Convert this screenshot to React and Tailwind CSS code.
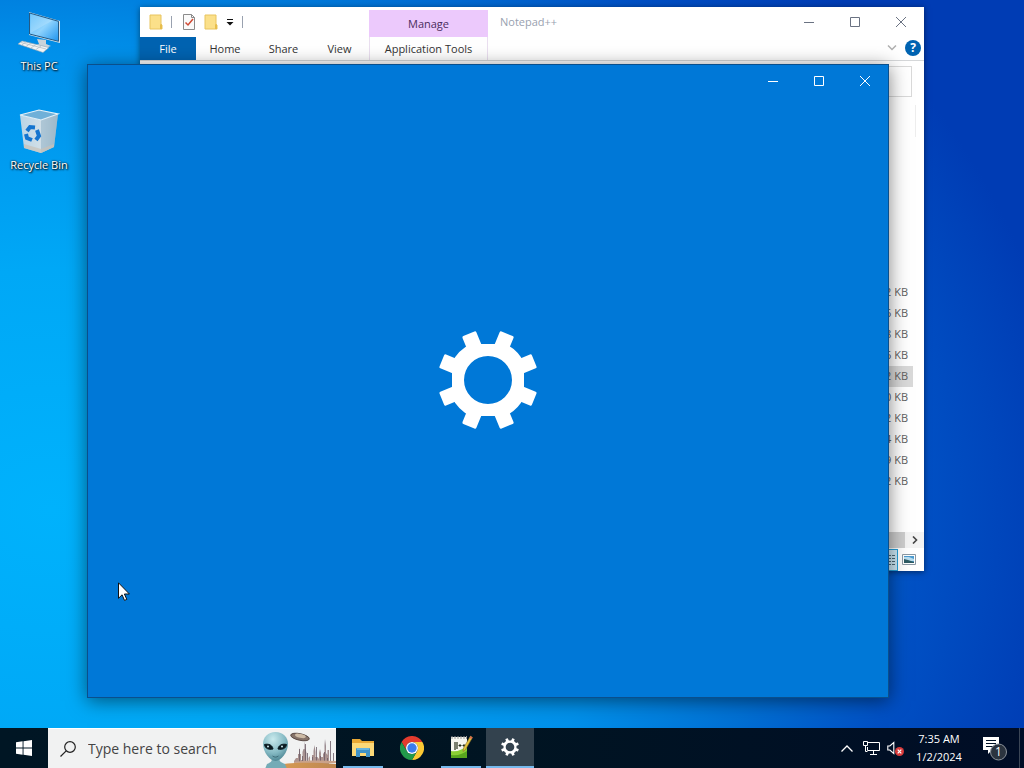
import React from 'react';

const FILE_SIZES = [
  { id: 1, size: '2 KB' },
  { id: 2, size: '6 KB' },
  { id: 3, size: '8 KB' },
  { id: 4, size: '6 KB' },
  { id: 5, size: '2 KB', selected: true },
  { id: 6, size: '0 KB' },
  { id: 7, size: '2 KB' },
  { id: 8, size: '4 KB' },
  { id: 9, size: '9 KB' },
  { id: 10, size: '2 KB' },
];

const TOOTH_ANGLES = [22.5, 67.5, 112.5, 157.5, 202.5, 247.5, 292.5, 337.5];

function Gear({ className }) {
  return (
    <svg viewBox="-50 -50 100 100" className={className} fill="currentColor" aria-hidden="true">
      <path
        fillRule="evenodd"
        d="M-17.4-36H17.4A40 40 0 0 1 36-17.4V17.4A40 40 0 0 1 17.4 36H-17.4A40 40 0 0 1-36 17.4V-17.4A40 40 0 0 1-17.4-36ZM0-24A24 24 0 1 0 0 24A24 24 0 1 0 0-24Z"
      />
      {TOOTH_ANGLES.map((angle) => (
        <rect key={angle} x="-7.5" y="-50" width="15" height="20" rx="1.5" transform={`rotate(${angle})`} />
      ))}
    </svg>
  );
}

function ComputerIcon() {
  return (
    <svg viewBox="0 0 44 44" className="w-11 h-11" aria-hidden="true">
      <defs>
        <linearGradient id="screen" x1="0" y1="0" x2="1" y2="1">
          <stop offset="0" stopColor="#52b9fb" />
          <stop offset="0.5" stopColor="#8fd3fd" />
          <stop offset="1" stopColor="#1c93ee" />
        </linearGradient>
      </defs>
      <path d="M20 29l9 1v4l5 2-9 3-8-3 5-2z" fill="#c9d3da" />
      <path d="M12 2l31 9v22l-31-8z" fill="#d3e3ec" />
      <path d="M12.500 3l29 8.300v20L12.500 24z" fill="url(#screen)" stroke="#245a85" strokeWidth="1" />
      <path d="M13.500 4l22 6.500L13.500 23z" fill="#fff" opacity=".18" />
      <path d="M5 31l27 6.500-6 5L1 34z" fill="#f2f4f5" stroke="#8fa5b3" strokeWidth=".6" />
      <path d="M4 32.500l25 6.500M9 31.800l-4 3M14 33l-5 3.500M19 34.500l-5 3.500M24 36l-5 3.500" stroke="#b3bec5" strokeWidth=".8" />
    </svg>
  );
}

function BinIcon() {
  return (
    <svg viewBox="0 0 44 46" className="w-11 h-[46px]" aria-hidden="true">
      <defs>
        <linearGradient id="bin" x1="0" y1="0" x2="1" y2="0">
          <stop offset="0" stopColor="#b9d4e6" />
          <stop offset="0.6" stopColor="#d3e0e8" />
          <stop offset="1" stopColor="#a8bfcd" />
        </linearGradient>
      </defs>
      <path d="M3 7l21 5 17-6-4 33-13 6-17-5z" fill="url(#bin)" />
      <path d="M24 12l17-6-4 33-13 6z" fill="#94b4c8" opacity=".6" />
      <path d="M3 7L22 2l19 4-17 6z" fill="#6fb0d8" stroke="#e4f1f8" strokeWidth="1.200" />
      <path d="M7 40l17 5 13-6v-3l-13 5-17-5z" fill="#c9c2b8" opacity=".7" />
      <g fill="none" stroke="#1474cf" strokeWidth="4">
        <path d="M10 23l3-4 5 .5" />
        <path d="M20 22l2 6-3 4" />
        <path d="M15 32l-5-2-1-4" />
      </g>
    </svg>
  );
}

function FolderIcon() {
  return (
    <svg viewBox="0 0 14 16" className="w-3.5 h-4" aria-hidden="true">
      <path d="M1 1h11v9l1 1v4H1z" fill="#fbe08a" stroke="#e8c45f" strokeWidth="1" />
      <path d="M11 10l2 1v4h-2z" fill="#e7bd4b" />
    </svg>
  );
}

function CheckPageIcon() {
  return (
    <svg viewBox="0 0 14 16" className="w-3.5 h-4" fill="none" aria-hidden="true">
      <path d="M1.500 .5h8l3 3v12h-11z" fill="#fafafa" stroke="#8b8b8b" />
      <path d="M9.500.5v3h3" stroke="#8b8b8b" />
      <path d="M3.500 8.500l2.500 2.500 5-6" stroke="#cf4a34" strokeWidth="1.500" />
    </svg>
  );
}

function WindowButtons({ className }) {
  return (
    <div className={`flex ${className}`}>
      <button aria-label="Minimize" className="w-[46px] flex items-center justify-center">
        <svg viewBox="0 0 10 10" className="w-2.5 h-2.5" stroke="currentColor"><path d="M0 5.500h10" /></svg>
      </button>
      <button aria-label="Maximize" className="w-[46px] flex items-center justify-center">
        <svg viewBox="0 0 10 10" className="w-2.5 h-2.5" stroke="currentColor" fill="none"><path d="M.5.5h9v9h-9z" /></svg>
      </button>
      <button aria-label="Close" className="w-[46px] flex items-center justify-center">
        <svg viewBox="0 0 10 10" className="w-2.5 h-2.5" stroke="currentColor"><path d="M0 0l10 10M10 0L0 10" /></svg>
      </button>
    </div>
  );
}

function DesktopIcon({ label, children }) {
  return (
    <button className="w-[78px] h-[99px] flex flex-col items-center text-[11px] leading-5 text-white [text-shadow:1px_1px_2px_#000,0_0_2px_#000]">
      <span className="h-12 flex items-center justify-center">{children}</span>
      <span>{label}</span>
    </button>
  );
}

function ExplorerWindow() {
  return (
    <section aria-label="Notepad++" className="absolute left-[140px] top-[7px] w-[784px] h-[564px] bg-white flex flex-col text-[11px] text-[#333] shadow-[0_1px_6px_rgba(0,0,0,0.5)]">
      <div className="h-[30px] flex">
        <div className="w-[229px] pl-[9px] pb-px flex items-center">
          <FolderIcon />
          <span className="ml-2 w-px h-3 bg-gray-400" />
          <button aria-label="Properties" className="ml-[10px]"><CheckPageIcon /></button>
          <button aria-label="New folder" className="ml-2"><FolderIcon /></button>
          <button aria-label="Customize Quick Access Toolbar" className="ml-2">
            <svg viewBox="0 0 8 8" className="w-2 h-2" aria-hidden="true"><path d="M1 1h6v1H1zM.5 4h7L4 7.500z" fill="#111" /></svg>
          </button>
          <span className="ml-2 w-px h-3 bg-gray-400" />
        </div>
        <div className="w-[119px] h-[27px] pt-px self-end bg-[#ecc9fc] text-[#4b2c5c] flex items-center justify-center">Manage</div>
        <h2 className="pl-3 flex-1 flex items-center text-gray-400">Notepad++</h2>
        <WindowButtons className="text-gray-500 pb-px" />
      </div>
      <div className="h-6 flex border-b border-[#d5d7d9]">
        <button className="w-14 pt-px bg-[#0063b1] text-white">File</button>
        <button className="w-[58px] pt-px">Home</button>
        <button className="w-[59px] pt-px">Share</button>
        <button className="w-[53px] pt-px">View</button>
        <button className="ml-[3px] w-[119px] pt-px border-x border-[#eadff0]">Application Tools</button>
        <div className="flex-1 pb-px flex items-center justify-end gap-2 pr-[3px]">
          <button aria-label="Expand the Ribbon">
            <svg viewBox="0 0 10 6" className="w-[10px] h-1.5" fill="none" stroke="#b0b0b0" strokeWidth="1.500" aria-hidden="true"><path d="M1 .5l4 4 4-4" /></svg>
          </button>
          <button aria-label="Help" className="w-4 h-4 rounded-full bg-[#0063b1] text-white font-bold text-[12px] leading-4">?</button>
        </div>
      </div>
      <div className="h-9 pt-[5px] pr-3">
        <input aria-label="Search Notepad++" className="w-full h-[31px] border border-[#d9d9d9] bg-white" />
      </div>
      <div className="h-8 mt-2 mr-2 border-r border-[#eeeeee]" />
      <div className="flex-1 flex flex-col justify-end pr-[11px] pb-10">
        <table className="w-full text-right text-[#5f5f5f]">
          <tbody>
            {FILE_SIZES.map((file) => (
              <tr key={file.id} className={`h-[21px] ${file.selected ? 'bg-[#d9d9d9]' : ''}`}>
                <td className="p-0 pr-[5px]">{file.size}</td>
              </tr>
            ))}
          </tbody>
        </table>
      </div>
      <div className="h-4 flex bg-[#f3f3f3]">
        <div className="flex-1 bg-[#cdcdcd]" />
        <button aria-label="Scroll right" className="w-[19px] pl-px flex items-center justify-center">
          <svg viewBox="0 0 6 8" className="w-1.5 h-2" fill="none" stroke="#444" strokeWidth="1.600" aria-hidden="true"><path d="M1 .5L4.500 4 1 7.500" /></svg>
        </button>
      </div>
      <div className="h-[23px] flex items-center justify-end gap-1 pr-2">
        <button aria-label="Details view" className="w-[22px] h-[22px] bg-[#cce8f6] border border-[#26a0da] flex items-center justify-end pr-px">
          <svg viewBox="0 0 12 10" className="w-3 h-2.5" stroke="#4c6a78" strokeDasharray="3 1" aria-hidden="true"><path d="M0 .5h12M0 3.500h12M0 6.500h12M0 9.500h12" /></svg>
        </button>
        <button aria-label="Thumbnail view">
          <svg viewBox="0 0 14 11" className="w-3.5 h-[11px]" aria-hidden="true">
            <path d="M.5.5h13v10H.5z" fill="#fff" stroke="#8c9aa5" />
            <path d="M2 2h10v7H2z" fill="#4c9bd0" />
            <path d="M2 3h5l5 2v2H2z" fill="#b9def0" />
            <path d="M2 5l4 1 6 2v1H2z" fill="#2d5b63" />
          </svg>
        </button>
      </div>
    </section>
  );
}

function SettingsWindow() {
  return (
    <section aria-label="Settings" className="absolute left-[87px] top-16 w-[802px] h-[634px] border border-[#0a4f8c] bg-[#0078d7] text-white flex flex-col shadow-[0_3px_18px_rgba(0,0,0,0.5)]">
      <WindowButtons className="h-8 justify-end" />
      <div className="flex-1 flex items-center justify-center pb-[34px]">
        <Gear className="w-[100px] h-[100px]" />
      </div>
    </section>
  );
}

function SearchArt() {
  return (
    <svg viewBox="0 0 74 40" className="w-[74px] h-10" aria-hidden="true">
      <defs>
        <radialGradient id="skin" cx=".4" cy=".25" r=".8">
          <stop offset="0" stopColor="#c9eaed" />
          <stop offset=".6" stopColor="#84b9c3" />
          <stop offset="1" stopColor="#47808e" />
        </radialGradient>
        <linearGradient id="sand" x1="0" y1="0" x2="1" y2="0">
          <stop offset="0" stopColor="#dfa055" />
          <stop offset="1" stopColor="#bd8750" />
        </linearGradient>
        <linearGradient id="city" x1="0" y1="0" x2="0" y2="1">
          <stop offset="0" stopColor="#8f858f" />
          <stop offset="1" stopColor="#b89a90" />
        </linearGradient>
      </defs>
      <path d="M32 36v-4l2-3h2v-4h1v-7l1 7h1v6h1.500v-8l1-3h1V12l1 8 1 4v8h2v-3l1.500-2v5h2v-6h1.500v-4l1-6 1 7v5h2l1.500 2v-6l1-4 1 4v4h2v-3l1.500-2v-7l.5-6 1 7v7l1.500 2v-5h1.500v16z" fill="url(#city)" />
      <path d="M37.500 33V20M40.500 33v-6M43.500 33V15M45.500 33v-9M50.500 33v-5M54.500 33V18M58.500 33v-6M62.500 33v-10M65.500 33v-4M68.500 33V12M71.500 33v-9" stroke="#6b5b66" strokeWidth=".8" />
      <path d="M32 33c14-2 28-1.500 42-1v2H32z" fill="#caa28a" />
      <path d="M0 40c10-1 20-6 33-6 14-.5 28 0 41 1v5z" fill="url(#sand)" />
      <ellipse cx="38" cy="8" rx="9.500" ry="3.300" transform="rotate(12 38 8)" fill="#85736a" stroke="#4b3b37" strokeWidth=".8" />
      <ellipse cx="38.500" cy="6.800" rx="5.500" ry="1.900" transform="rotate(12 38 6.500)" fill="#cdbba6" />
      <path d="M10 27h7c0 5 1 6 6 8l2 5H3l2-5c5-2 5-3 5-8z" fill="#74abb6" />
      <path d="M13.500 3C21 3 26 8 26 15c0 8-7 17-12.500 17S1 23 1 15C1 8 6 3 13.500 3z" fill="url(#skin)" />
      <path d="M2.500 15.500c4-1 8 .5 8.500 4.500-4.500 1-8-.5-8.500-4.500zM24.500 15.500c-4-1-8 .5-8.500 4.500 4.500 1 8-.5 8.500-4.500z" fill="#0a1a20" stroke="#0a1a20" />
      <circle cx="6" cy="17.500" r="1" fill="#cfe8ee" />
      <circle cx="20" cy="17.500" r="1" fill="#cfe8ee" />
      <path d="M10.500 27c2 1.500 4 1.500 6 0" stroke="#33616c" strokeWidth=".8" fill="none" />
    </svg>
  );
}

function TaskButton({ label, open, active, children }) {
  return (
    <button aria-label={label} className={`w-12 h-10 flex flex-col items-center ${active ? 'bg-[#33424e] text-white' : ''}`}>
      <span className="flex-1 flex items-center justify-center">{children}</span>
      {(open || active) && <span className={`h-0.5 bg-[#76b9ed] ${active ? 'w-full' : 'w-10'}`} />}
    </button>
  );
}

function Taskbar() {
  return (
    <footer className="h-10 flex bg-gradient-to-r from-[#001624] via-[#001422] to-[#000d26] text-white">
      <button aria-label="Start" className="w-12 flex items-center justify-center">
        <svg viewBox="0 0 16 16" className="w-4 h-4" fill="#fff" aria-hidden="true">
          <path d="M0 2.300L6.600 1.300v6.300H0zM7.500 1.200L16 0v7.600H7.500zM0 8.400h6.600v6.300L0 13.700zM7.500 8.400H16V16l-8.500-1.200z" />
        </svg>
      </button>
      <div className="w-72 flex items-center bg-[#f1f2f2] border-t border-white">
        <svg viewBox="0 0 16 16" className="ml-3 w-4 h-4 shrink-0" fill="none" stroke="#222" strokeWidth="1.200" aria-hidden="true">
          <circle cx="10" cy="6" r="5.300" />
          <path d="M6.200 9.800L.5 15.500" />
        </svg>
        <input aria-label="Type here to search" placeholder="Type here to search" className="ml-3 flex-1 min-w-0 bg-transparent text-[14px] placeholder:text-[#444] outline-none" />
        <SearchArt />
      </div>
      <nav className="ml-[3px] flex gap-px">
        <TaskButton label="File Explorer" open>
          <svg viewBox="0 0 22 19" className="w-[22px] h-[19px]" aria-hidden="true">
            <path d="M0 1h8l2 2h12v15H0z" fill="#e9a935" />
            <path d="M0 5h22v13H0z" fill="#fcd978" />
            <path d="M4 19v-8q0-1 1-1h12q1 0 1 1v8h-4v-4H8v4z" fill="#3f93c9" />
            <path d="M5 10h12v2H5z" fill="#67b5df" />
          </svg>
        </TaskButton>
        <TaskButton label="Google Chrome">
          <svg viewBox="-12 -12 24 24" className="w-6 h-6" aria-hidden="true">
            <path d="M-10.400-6A12 12 0 0 1 10.400-6H0A6 6 0 0 0-5.200 3z" fill="#e33b2e" />
            <path d="M10.400-6A12 12 0 0 1 0 12L5.200 3A6 6 0 0 0 0-6z" fill="#fcc934" />
            <path d="M0 12A12 12 0 0 1-10.400-6L-5.200 3A6 6 0 0 0 5.200 3z" fill="#229a4a" />
            <circle r="6" fill="#fff" />
            <circle r="4.700" fill="#3b7ded" />
          </svg>
        </TaskButton>
        <TaskButton label="Notepad++" open>
          <svg viewBox="0 0 24 24" className="w-6 h-6" aria-hidden="true">
            <path d="M2 2h16v21H2z" fill="#f5f6ee" />
            <path d="M2 16c6 1 11-1 16-5v12H2z" fill="#8bcf35" />
            <path d="M2 20c7 1 11-1 16-4v7H2z" fill="#58a51e" />
            <path d="M3 1v3M6 1v3M9 1v3M12 1v3M15 1v3M17.500 1v3" stroke="#9a9a9a" />
            <path d="M6 7v8M8 7v7" stroke="#273019" strokeWidth="1.200" />
            <path d="M9.500 10.500h3M11 9v3M13.500 10.500h3M15 9v3" stroke="#273019" />
            <path d="M21.500 1l2 1.500-7 12-2.500 2 .5-3.500z" fill="#e5c33d" stroke="#86702a" strokeWidth=".6" />
            <path d="M21.500 1l2 1.500-1 1.700-2-1.500z" fill="#d96b51" />
          </svg>
        </TaskButton>
        <TaskButton label="Settings" active>
          <Gear className="w-[18px] h-[18px]" />
        </TaskButton>
      </nav>
      <div className="ml-auto flex items-center">
        <button aria-label="Show hidden icons" className="w-6 flex justify-center">
          <svg viewBox="0 0 12 7" className="w-3 h-[7px]" fill="none" stroke="#fff" strokeWidth="1.300" aria-hidden="true"><path d="M.5 6.500L6 1l5.500 5.500" /></svg>
        </button>
        <button aria-label="Network" className="w-6 flex justify-center">
          <svg viewBox="0 0 17 14" className="w-[17px] h-3.5" fill="none" stroke="#fff" aria-hidden="true">
            <path d="M5 1.500h11.500v8h-12V6M10.500 9.500v4M7 13.500h7" />
            <path d="M.5.5h4v4h-4zM2.500 4.500v6h2" />
          </svg>
        </button>
        <button aria-label="Volume muted" className="w-6 flex justify-center">
          <svg viewBox="0 0 17 15" className="w-[17px] h-[15px]" fill="none" aria-hidden="true">
            <path d="M.8 5h2l4-3.500v11l-4-3.500h-2z" stroke="#fff" strokeWidth="1.100" />
            <circle cx="12.500" cy="10.500" r="4.500" fill="#d83b3b" />
            <path d="M10.700 8.700l3.600 3.600M14.300 8.700l-3.600 3.600" stroke="#fff" strokeWidth="1.200" />
          </svg>
        </button>
        <button className="w-16 text-center text-[11px] leading-[18px]">
          7:35 AM
          <br />
          1/2/2024
        </button>
        <button aria-label="1 new notification" className="w-12 h-10 flex items-center justify-center">
          <svg viewBox="0 0 24 26" className="w-6 h-[26px]" aria-hidden="true">
            <path d="M0 2h16v13H9l-4 4v-4H0z" fill="#fff" />
            <path d="M3 5.500h10M3 8.500h10M3 11.500h7" stroke="#001226" strokeWidth="1.200" />
            <circle cx="15.500" cy="17" r="8" fill="#2b343f" stroke="#8b929a" />
            <text x="15.500" y="21" textAnchor="middle" fontSize="12" fill="#fff">1</text>
          </svg>
        </button>
        <button aria-label="Show desktop" className="w-[5px] h-10 border-l border-[#3b4656]" />
      </div>
    </footer>
  );
}

export default function App() {
  return (
    <div className="h-screen flex flex-col overflow-hidden font-['Open_Sans','Noto_Sans',sans-serif] bg-[#0078d7]">
      <main className="relative flex-1 overflow-hidden bg-[radial-gradient(ellipse_100%_110%_at_5%_70%,#00b2fc_0%,#00a8f6_30%,#0090ea_57%,#0070d4_72%,#0050c4_85%,#003cb4_100%)]">
        <div className="pt-2 flex flex-col items-start">
          <DesktopIcon label="This PC"><ComputerIcon /></DesktopIcon>
          <DesktopIcon label="Recycle Bin"><BinIcon /></DesktopIcon>
        </div>
        <ExplorerWindow />
        <SettingsWindow />
        <svg viewBox="0 0 12 19" className="absolute left-[118px] top-[582px] w-3 h-[19px]" aria-hidden="true">
          <path d="M.5.800v15.500l3.600-3.500 2.400 5.600 2.300-1-2.400-5.400h5z" fill="#fff" stroke="#111" strokeWidth="1" />
        </svg>
      </main>
      <Taskbar />
    </div>
  );
}
